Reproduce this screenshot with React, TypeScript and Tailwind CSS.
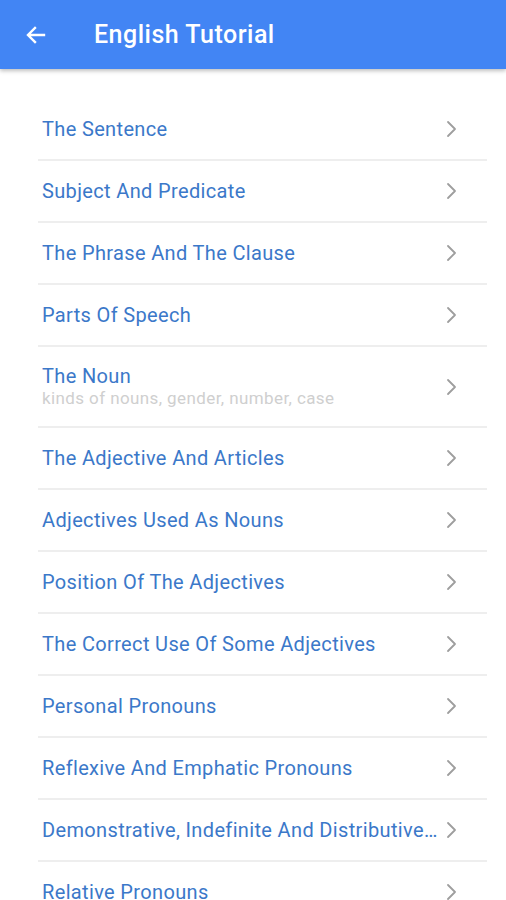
import React from "react";

const items: { title: string; sub?: string }[] = [
  { title: "The Sentence" },
  { title: "Subject And Predicate" },
  { title: "The Phrase And The Clause" },
  { title: "Parts Of Speech" },
  { title: "The Noun", sub: "kinds of nouns, gender, number, case" },
  { title: "The Adjective And Articles" },
  { title: "Adjectives Used As Nouns" },
  { title: "Position Of The Adjectives" },
  { title: "The Correct Use Of Some Adjectives" },
  { title: "Personal Pronouns" },
  { title: "Reflexive And Emphatic Pronouns" },
  { title: "Demonstrative, Indefinite And Distributive Pronouns" },
  { title: "Relative Pronouns" },
  { title: "Interrogative Pronouns" },
];

function Chevron() {
  return (
    <svg width="14" height="18" viewBox="0 0 14 18" className="shrink-0">
      <path d="M3 2 L10 9 L3 16" fill="none" stroke="#9e9e9e" strokeWidth="1.8" strokeLinecap="round" strokeLinejoin="round" />
    </svg>
  );
}

export default function App() {
  return (
    <div className="w-[506px] h-[900px] overflow-hidden bg-white" style={{ fontFamily: "Roboto, 'Noto Sans', sans-serif" }}>
      <div className="h-[69px] bg-[#4285f4] flex items-center shadow-[0_2px_4px_rgba(0,0,0,0.25)] relative z-10">
        <div className="w-[94px] pl-[24px] flex items-center">
          <svg width="24" height="24" viewBox="0 0 24 24">
            <path d="M20 12 H5 M11 5 L4 12 L11 19" fill="none" stroke="white" strokeWidth="2.4" strokeLinecap="square" />
          </svg>
        </div>
        <div className="text-white text-[25px] font-medium tracking-[0.5px]">English Tutorial</div>
      </div>
      <div className="pt-[30px] ml-[38px] mr-[19px]">
        {items.map((it, i) => (
          <div key={i} className="flex items-center border-b-2 border-[#eeeeee] pl-[4px] pr-[28px]" style={{ height: it.sub ? 81 : 62 }}>
            <div className="flex-1 min-w-0 pr-[4px]">
              <div className="text-[20px] tracking-[0.35px] text-[#3b78c9] truncate leading-[24px]">{it.title}</div>
              {it.sub && <div className="text-[17px] tracking-[0.4px] text-[#cfcfcf] leading-[21px]">{it.sub}</div>}
            </div>
            <Chevron />
          </div>
        ))}
      </div>
    </div>
  );
}
